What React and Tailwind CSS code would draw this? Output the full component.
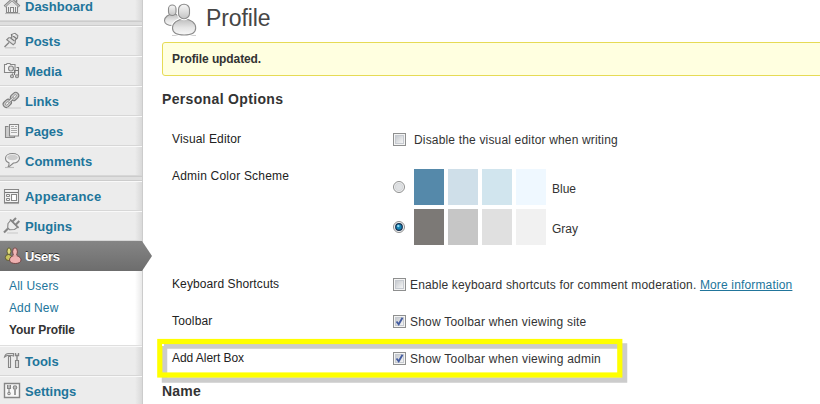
import React from "react";

const g = "#868686";

/* Menu glyphs share a 24x28 box aligned with the menu row. */
function Glyph({ children }) {
  return (
    <svg width="24" height="28" viewBox="0 0 24 28" fill="none" stroke={g} strokeWidth="1.1" className="block shrink-0">
      {children}
    </svg>
  );
}

const icons = {
  dashboard: (
    <Glyph>
      <path d="M6.500 15v6.500h11V15" fill="#f6f6f6" />
      <path d="M4.500 15.500 12 8.500l7.500 7" fill="#e4e4e4" strokeWidth="2.400" />
      <path d="M4.800 15.500 12 8.800l7.200 6.700" stroke="#f2f2f2" strokeWidth=".8" />
      <path d="M10.500 21.500v-5h3v5M8.500 16v5M15.500 16v5" />
      <path d="M16.500 8.500v3" strokeWidth="1.600" />
      <path d="M5 22.500h15" stroke="#bbb" />
    </Glyph>
  ),
  posts: (
    <Glyph>
      <path d="M11.500 8.500 15 7.300l2.800 2.200-.3 2.500-2 1.500-.3 3.500-2 1.800-6.500-5 2-2 3-.3z" fill="#e0e0e0" />
      <path d="m11 8.500 6 4.500M10.500 12l4 3" stroke="#777" />
      <path d="M9 16.500 4.500 21" strokeWidth="1.500" />
      <path d="m12.500 9.500 2.500-1" stroke="#fff" />
      <path d="M5 21.800h11" stroke="#c4c4c4" />
    </Glyph>
  ),
  media: (
    <Glyph>
      <path d="M4.500 8.500h2l.5-1h3l.5 1h4.500v8h-10.500z" fill="#f4f4f4" />
      <circle cx="11" cy="12.500" r="2.500" fill="#ddd" />
      <path d="M12.500 20v-2.500M18.500 20v-8.500h-2M14.500 19v-4.500h4" stroke="#777" />
      <circle cx="12" cy="20.200" r="1.500" fill="#ccc" />
      <circle cx="17" cy="20.200" r="1.500" fill="#ccc" />
    </Glyph>
  ),
  links: (
    <Glyph>
      <g transform="rotate(-43 11 14)">
        <rect x="1.500" y="10.800" width="9" height="6.200" rx="3.100" fill="#ccc" stroke="#7d7d7d" />
        <rect x="11.500" y="10.800" width="9" height="6.200" rx="3.100" fill="#ccc" stroke="#7d7d7d" />
        <rect x="3.800" y="12.900" width="4" height="2" rx="1" fill="#f6f6f6" strokeWidth=".8" />
        <rect x="14.200" y="12.900" width="4" height="2" rx="1" fill="#f6f6f6" strokeWidth=".8" />
        <path d="M7.500 13.900h7" strokeWidth="2.400" stroke="#8a8a8a" />
        <path d="M7.500 13.900h7" strokeWidth="1" stroke="#e8e8e8" />
      </g>
      <path d="M7 22h14" stroke="#ccc" />
    </Glyph>
  ),
  pages: (
    <Glyph>
      <path d="M8.500 10.500h-3v11h9v-1.500" fill="#ccc" />
      <path d="M9.500 8.500h9v11.500H9.500z" fill="#f4f4f4" />
      <path d="M11 10.500h3M15 10.500h2M11 12.500h6M11 14.500h6M11 16.500h6" stroke="#aaa" strokeWidth="1" />
    </Glyph>
  ),
  comments: (
    <Glyph>
      <path d="M12.500 7.500c4 0 7 2 7 4.800s-3 4.700-6 4.700c-2 1.300-3 3.500-5.500 4 1-1.500 1.200-3 1-4.200C6.500 16 5.500 14.500 5.500 12.300c0-2.800 3-4.800 7-4.800z" fill="#f2f2f2" />
      <ellipse cx="12.500" cy="11.500" rx="5.300" ry="2.800" fill="#cdcdcd" stroke="none" />
      <path d="M5 21.500h9" stroke="#bbb" />
    </Glyph>
  ),
  appearance: (
    <Glyph>
      <path d="M4.500 8.500h14v13h-14z" fill="#f5f5f5" />
      <path d="M5 11.500h13" stroke="#777" />
      <path d="M11.500 13.500h5v6h-5z" fill="#fff" />
      <path d="M6.500 13.500h3v2h-3zM6.500 17.500h3v2h-3z" strokeWidth="1" />
      <path d="M4 22.500h15" stroke="#aaa" />
    </Glyph>
  ),
  plugins: (
    <Glyph>
      <path d="M8 12.500 11 9l7 7-3.500 2.500-5 .2-1.800-2.200z" fill="#ececec" />
      <path d="m10 8.500 8.500 8.500" strokeWidth="1.600" />
      <path d="M12.500 10.500 16 7M15.500 14l3.800-4" strokeWidth="2" />
      <path d="M8 17.500 4 21.500" strokeWidth="2.200" />
      <path d="M7 22h11" stroke="#ccc" />
    </Glyph>
  ),
  users: (
    <Glyph>
      <ellipse cx="8.500" cy="16.500" rx="3.200" ry="3" fill="#c8c35e" stroke="#57552f" strokeWidth=".9" />
      <ellipse cx="9" cy="10.200" rx="2" ry="3.300" fill="#e1dc7b" stroke="#57552f" strokeWidth=".9" />
      <path d="M9.500 19c0-2.500 2.500-4.500 5.500-4.500s6 2 6 4.500-3 3.500-5.700 3.500-5.800-1-5.800-3.500z" fill="#eeb0b0" stroke="#6b3d3d" strokeWidth=".9" />
      <ellipse cx="15" cy="10.800" rx="2.400" ry="4" fill="#f0b6b6" stroke="#6b3d3d" strokeWidth=".9" />
      <path d="M13.300 14.800h3.400" stroke="#eeb0b0" strokeWidth="1.500" />
    </Glyph>
  ),
  tools: (
    <Glyph>
      <path d="M4.500 11c.5-2.300 2-3.500 4-3.500h5V10l-2-.5H7z" fill="#ddd" />
      <path d="M8.500 10.500h2v11h-2z" fill="#eee" />
      <path d="M15.500 7v2.500h3V7M17 10v4" strokeWidth="1.400" />
      <path d="M15.500 14.500h3v7h-3z" fill="#ddd" />
    </Glyph>
  ),
  settings: (
    <Glyph>
      <path d="M4.500 7.500h15v14h-15z" fill="#f8f8f8" strokeWidth="1.400" />
      <path d="M7.500 9v3.500h3V9" fill="#bbb" />
      <path d="M9 12v5" />
      <circle cx="9" cy="17.500" r="1.200" />
      <circle cx="15" cy="11.500" r="1.800" fill="#bbb" />
      <path d="M15 13.500v5.500" strokeWidth="1.600" />
    </Glyph>
  ),
};

function Item({ icon, label, className = "" }) {
  return (
    <a className={`flex h-[30px] shrink-0 border-t border-b border-t-[#f9f9f9] border-b-[#d7d7d7] text-[13px] leading-[30px] font-bold text-[#21759b] ${className}`}>
      <span className="-mt-px">{icons[icon]}</span>
      <span className="ml-[1px]">{label}</span>
    </a>
  );
}

function Separator() {
  return <div className="h-[5px] shrink-0 border-t border-b border-[#cccccc] bg-[#dfdfdf]" />;
}

function Sidebar() {
  return (
    <nav className="flex h-[404px] w-[143px] shrink-0 flex-col overflow-hidden border-r border-[#cccccc] bg-[#ececec] bg-[linear-gradient(to_left,#d9d9d9,#ececec_7px)]">
      <Item icon="dashboard" label="Dashboard" className="-mt-[9px]" />
      <Separator />
      <Item icon="posts" label="Posts" />
      <Item icon="media" label="Media" />
      <Item icon="links" label="Links" />
      <Item icon="pages" label="Pages" />
      <Item icon="comments" label="Comments" />
      <Separator />
      <Item icon="appearance" label="Appearance" className="tracking-[0.2px]" />
      <Item icon="plugins" label="Plugins" />
      <div className="flex h-[30px] w-[142px] shrink-0 bg-[linear-gradient(#858585,#6d6d6d)] text-[13px] leading-[31px] font-bold tracking-[-0.3px] text-white">
        {icons.users}
        <span className="ml-[1px] [text-shadow:0_-1px_0_#333]">Users</span>
      </div>
      <div className="flex h-[75px] shrink-0 flex-col border-b border-[#dfdfdf] bg-[linear-gradient(to_left,#e9e9e9,#ffffff_7px)] pt-[4px] pl-[9px] text-[12px] leading-[22px] text-[#21759b]">
        <a className="tracking-[0.2px]">All Users</a>
        <a className="tracking-[0.1px]">Add New</a>
        <a className="font-bold tracking-[-0.1px] text-[#333333]">Your Profile</a>
      </div>
      <Item icon="tools" label="Tools" />
      <Item icon="settings" label="Settings" />
    </nav>
  );
}

function UsersIcon() {
  return (
    <svg width="36" height="36" viewBox="0 0 36 36" stroke="#8b8b8b" strokeWidth="1.1" className="block">
      <defs>
        <linearGradient id="body" x1="0" y1="0" x2="0" y2="1">
          <stop offset="0" stopColor="#bdbdbd" />
          <stop offset=".55" stopColor="#e6e6e6" />
          <stop offset="1" stopColor="#f8f8f8" />
        </linearGradient>
        <linearGradient id="head" x1="0" y1="0" x2="0" y2="1">
          <stop offset="0" stopColor="#f8f8f8" />
          <stop offset="1" stopColor="#c4c4c4" />
        </linearGradient>
      </defs>
      <path d="M10 35.500h24" stroke="#d0d0d0" />
      <path d="M2.500 20.500c0-3.500 4-6.500 8.500-6.500s8 3 8 6.500-4 5-8.500 5-8-1.500-8-5z" fill="url(#body)" />
      <rect x="6.500" y="5" width="7.500" height="10.500" rx="3.700" fill="url(#head)" />
      <path d="M10.500 28c0-5 5-9 11.700-9s11.500 4 11.500 9-5 7-11.500 7-11.700-2-11.700-7z" fill="url(#body)" stroke="#fff" strokeWidth="3" />
      <path d="M10.500 28c0-5 5-9 11.700-9s11.500 4 11.500 9-5 7-11.500 7-11.700-2-11.700-7z" fill="url(#body)" />
      <rect x="16.500" y="4.200" width="11" height="14.500" rx="5.300" fill="url(#head)" stroke="#fff" strokeWidth="3" />
      <rect x="16.500" y="4.200" width="11" height="14.500" rx="5.300" fill="url(#head)" />
    </svg>
  );
}

function Check({ on }) {
  return (
    <svg width="13" height="13" viewBox="0 0 13 13" className="block shrink-0">
      <defs>
        <linearGradient id="chk" x1="0" y1="0" x2="1" y2="1">
          <stop offset="0" stopColor="#c3c7cc" />
          <stop offset="1" stopColor="#f8f8f8" />
        </linearGradient>
      </defs>
      <rect x=".5" y=".5" width="12" height="12" fill="#f4f4f4" stroke="#8e8f8f" />
      <rect x="2.500" y="2.500" width="8" height="8" fill="url(#chk)" stroke="#c6cad0" />
      {on && <path d="M3.500 6.500 5.700 9.300 9.500 2.800" fill="none" stroke="#445ca0" strokeWidth="1.800" />}
    </svg>
  );
}

function Radio({ on }) {
  return (
    <svg width="12" height="12" viewBox="0 0 12 12" className="block shrink-0">
      <circle cx="6" cy="6" r="5.500" fill="#f4f4f4" stroke="#8e8f8f" />
      {on ? (
        <>
          <circle cx="6" cy="6" r="3.300" fill="#1583b5" stroke="#17304f" strokeWidth="1.200" />
          <circle cx="5.300" cy="5" r="1.200" fill="#8bdcf7" />
        </>
      ) : (
        <circle cx="6" cy="6" r="3.800" fill="#dfe1e3" stroke="#cfd2d6" strokeWidth=".8" />
      )}
    </svg>
  );
}

function Row({ label, children, className = "h-[37px]", labelClass = "tracking-[0.16px]" }) {
  return (
    <div className={`flex ${className}`}>
      <div className={`w-[221px] shrink-0 text-[#222222] ${labelClass}`}>{label}</div>
      {children}
    </div>
  );
}

function Option({ on, children, gap = "gap-[4px]", tracking = "tracking-[0.17px]" }) {
  return (
    <label className={`flex h-[20px] items-center pt-px whitespace-nowrap ${gap} ${tracking}`}>
      <Check on={on} />
      <span>{children}</span>
    </label>
  );
}

function Scheme({ on, name, colors }) {
  return (
    <label className="flex h-[36px]">
      <span className="w-[21px] pt-[12px]">
        <Radio on={on} />
      </span>
      <span className="flex gap-[4px]">
        {colors.map((c) => (
          <span key={c} className="h-[36px] w-[30px]" style={{ backgroundColor: c }} />
        ))}
      </span>
      <span className="ml-[6px] leading-[40px]">{name}</span>
    </label>
  );
}

export default function App() {
  return (
    <div className="flex h-[404px] w-[820px] overflow-hidden bg-white [font-family:'Liberation_Sans',Arial,sans-serif]">
      <div className="relative z-10 w-[143px] shrink-0">
        <Sidebar />
        <div className="absolute top-[241px] left-[142px] h-[30px] w-[10px] bg-[linear-gradient(#858585,#6d6d6d)] [clip-path:polygon(0_0,100%_50%,0_100%)]" />
      </div>
      <main className="relative flex min-w-0 grow flex-col pl-[19px] text-[12px] leading-[20px] text-[#333333]">
        <header className="flex h-[42px] shrink-0">
          <UsersIcon />
          <h1 className="ml-[8px] text-[23px] leading-[36px] tracking-[-0.1px] text-[#464646]">Profile</h1>
        </header>
        <div className="-mr-2 h-[34px] shrink-0 rounded-[3px] border border-[#e6db55] bg-[#ffffe0] pl-[9px] leading-[32px] font-bold tracking-[-0.1px]">
          Profile updated.
        </div>
        <h3 className="mt-[13px] h-[40px] shrink-0 text-[14px] leading-[20px] font-bold tracking-[0.34px]">Personal Options</h3>
        <div className="pl-[10px]">
          <Row label="Visual Editor">
            <Option gap="gap-[8px]">Disable the visual editor when writing</Option>
          </Row>
          <Row label="Admin Color Scheme" className="h-[108px]" labelClass="tracking-[0.21px]">
            <div className="mt-[3px] flex flex-col gap-[4px]">
              <Scheme name="Blue" colors={["#5589aa", "#cfdfe9", "#d1e5ee", "#eff8ff"]} />
              <Scheme on name="Gray" colors={["#7c7976", "#c6c6c6", "#e0e0e0", "#f1f1f1"]} />
            </div>
          </Row>
          <Row label="Keyboard Shortcuts" labelClass="tracking-[0.1px]">
            <Option tracking="tracking-[0.155px]">
              Enable keyboard shortcuts for comment moderation. <a className="text-[#21759b] underline">More information</a>
            </Option>
          </Row>
          <Row label="Toolbar">
            <Option on tracking="tracking-[0.22px]">Show Toolbar when viewing site</Option>
          </Row>
          <Row label="Add Alert Box" className="h-[33px]" labelClass="tracking-[-0.05px]">
            <Option on tracking="tracking-[0.23px]">Show Toolbar when viewing admin</Option>
          </Row>
        </div>
        <h3 className="text-[14px] leading-[20px] font-bold tracking-[0.2px]">Name</h3>
        <svg width="472" height="46" viewBox="0 0 472 46" fill="none" className="pointer-events-none absolute top-[338px] left-[14px]">
          <rect x="7.500" y="8" width="460" height="34" stroke="#cccccc" strokeWidth="5.500" />
          <rect x="2.800" y="3.500" width="460" height="33.500" stroke="#ffff00" strokeWidth="5.200" />
          <path d="M5 6h2v2H5z" fill="#fff" />
        </svg>
      </main>
    </div>
  );
}
